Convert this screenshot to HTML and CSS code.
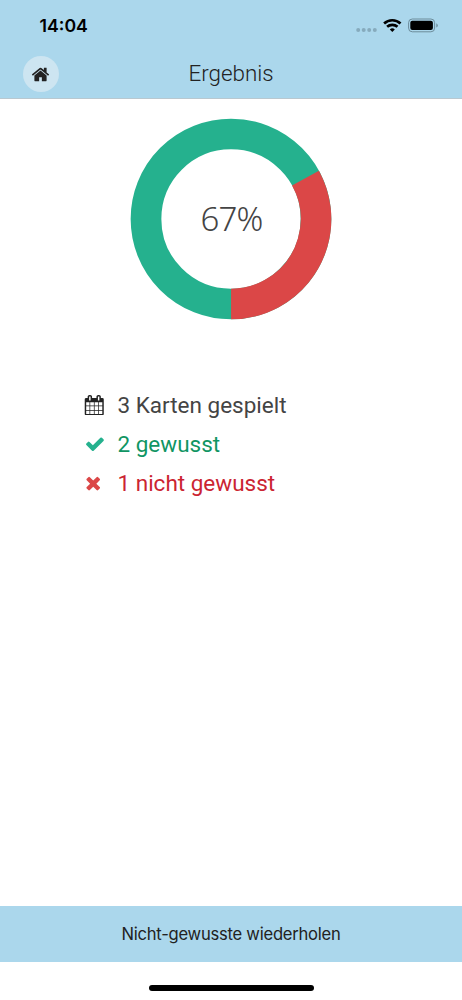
FILE: index.html
```html
<!DOCTYPE html>
<html lang="de">
<head>
  <meta charset="UTF-8" />
  <meta name="viewport" content="width=device-width, initial-scale=1.0" />
  <title>Ergebnis</title>
  <link rel="stylesheet" href="styles.css">
</head>
<body>

<header>
  <div class="statusbar">
    <span class="time">14:04</span>
    <svg class="status-icons" width="84" height="20" viewBox="0 0 84 20">
      <g fill="#86abbd">
        <circle cx="2.2" cy="14" r="2" />
        <circle cx="7.7" cy="14" r="2" />
        <circle cx="13.2" cy="14" r="2" />
        <circle cx="18.8" cy="14" r="2" />
      </g>
      <g fill="none" stroke="#000" stroke-width="2.7">
        <path d="M28.1 7.4a12.2 12.2 0 0 1 16.4 0" />
        <path d="M31.1 10.8a7.7 7.7 0 0 1 10.4 0" />
      </g>
      <path d="M36.3 16l-2.5-2.6a3.7 3.7 0 0 1 5 0z" />
      <rect x="52.6" y="3" width="26" height="12.8" rx="3.7" fill="none" stroke="#6c8c9b" />
      <rect x="54.3" y="4.8" width="22.6" height="9.2" rx="2" />
      <path d="M80.3 7.2q1.5.7 1.5 2.2t-1.5 2.2z" fill="#6c8c9b" />
    </svg>
  </div>
  <div class="navbar">
    <a class="home" href="#" aria-label="Start">
      <svg width="19" height="19" viewBox="0 0 1792 1792"><path d="M1472 992v480q0 26-19 45t-45 19h-384v-384h-256v384h-384q-26 0-45-19t-19-45v-480q0-1 .5-3t.5-3l575-474 575 474q1 2 1 6zm223-69l-62 74q-8 9-21 11h-3q-13 0-21-7l-692-577-692 577q-12 8-24 7-13-2-21-11l-62-74q-8-10-7-23.5t11-21.5l719-599q32-26 76-26t76 26l244 204v-195q0-14 9-23t23-9h192q14 0 23 9t9 23v408l219 182q10 8 11 21.5t-7 23.5z" /></svg>
    </a>
    <h1>Ergebnis</h1>
  </div>
</header>

<main>
  <svg class="chart" width="202" height="202" viewBox="0 0 202 202">
    <circle class="ring right" cx="101" cy="101" r="85" />
    <circle class="ring wrong" cx="101" cy="101" r="85" pathLength="100" stroke-dasharray="33 67" transform="rotate(-28.8 101 101)" />
    <text x="101.5" y="113" text-anchor="middle">67%</text>
  </svg>

  <ul class="stats">
    <li class="played">
      <svg width="20.5" height="20.5" viewBox="0 0 1792 1792"><path d="M192 1664h288v-288h-288v288zm352 0h320v-288h-320v288zm-352-352h288v-320h-288v320zm352 0h320v-320h-320v320zm-352-384h288v-288h-288v288zm736 736h320v-288h-320v288zm-384-736h320v-288h-320v288zm768 736h288v-288h-288v288zm-384-352h320v-320h-320v320zm-352-864v-288q0-13-9.5-22.5t-22.5-9.5h-64q-13 0-22.5 9.5t-9.5 22.5v288q0 13 9.5 22.5t22.5 9.5h64q13 0 22.5-9.5t9.5-22.5zm736 864h288v-320h-288v320zm-384-384h320v-288h-320v288zm384 0h288v-288h-288v288zm32-480v-288q0-13-9.5-22.5t-22.5-9.5h-64q-13 0-22.5 9.5t-9.5 22.5v288q0 13 9.5 22.5t22.5 9.5h64q13 0 22.5-9.5t9.5-22.5zm384-64v1280q0 52-38 90t-90 38h-1408q-52 0-90-38t-38-90v-1280q0-52 38-90t90-38h128v-96q0-66 47-113t113-47h64q66 0 113 47t47 113v96h384v-96q0-66 47-113t113-47h64q66 0 113 47t47 113v96h128q52 0 90 38t38 90z" /></svg>
      <span>3 Karten gespielt</span>
    </li>
    <li class="known">
      <svg width="20.5" height="20.5" viewBox="-60 30 1792 1792"><path d="M1671 566q0 40-28 68l-724 724-136 136q-28 28-68 28t-68-28l-136-136-362-362q-28-28-28-68t28-68l136-136q28-28 68-28t68 28l294 295 656-657q28-28 68-28t68 28l136 136q28 28 28 68z" /></svg>
      <span>2 gewusst</span>
    </li>
    <li class="unknown">
      <svg width="20.5" height="20.5" viewBox="90 30 1792 1792"><path d="M1490 1322q0 40-28 68l-136 136q-28 28-68 28t-68-28l-294-294-294 294q-28 28-68 28t-68-28l-136-136q-28-28-28-68t28-68l294-294-294-294q-28-28-28-68t28-68l136-136q28-28 68-28t68 28l294 294 294-294q28-28 68-28t68 28l136 136q28 28 28 68t-28 68l-294 294 294 294q28 28 28 68z" /></svg>
      <span>1 nicht gewusst</span>
    </li>
  </ul>
</main>

<footer>
  <button type="button">Nicht-gewusste wiederholen</button>
  <div class="home-indicator"></div>
</footer>

</body>
</html>
```
FILE: styles.css
```css
body {
  font-family: Roboto, sans-serif;
  background: #fff;
  color: #444;
  margin: 0;
  height: 1000px;
  display: flex;
  flex-direction: column;
}
svg {
  display: block;
}
header {
  background: #abd7ec;
  box-sizing: border-box;
  height: 99px;
  border-bottom: 1px solid #b9c8d0;
}
.statusbar {
  display: flex;
  justify-content: space-between;
  height: 50px;
  padding: 0 22px 0 39.5px;
  align-items: center;
}
.time {
  font-family: Inter, sans-serif;
  font-size: 17.7px;
  font-weight: 600;
  color: #000;
}
.status-icons {
  margin-top: 2px;
}
.navbar {
  display: grid;
  grid-template-columns: 36px 1fr 36px;
  align-items: center;
  height: 48px;
  padding: 0 22px;
}
.home {
  display: flex;
  align-items: center;
  justify-content: center;
  width: 36px;
  height: 36px;
  margin-left: 0.5px;
  border-radius: 50%;
  background: #cde5f1;
  fill: #222;
}
h1 {
  margin: 0 0 3px;
  font-size: 22.4px;
  font-weight: 300;
  color: #222;
  text-align: center;
}
main {
  flex: 1;
}
.chart {
  margin: 19px auto 0;
}
.chart text {
  font-family: "Noto Sans", sans-serif;
  font-size: 33px;
  font-weight: 300;
  letter-spacing: -0.9px;
  fill: #444;
}
.ring {
  fill: none;
  stroke-width: 30.7;
}
.right {
  stroke: #25b18e;
}
.wrong {
  stroke: #db4747;
}
.stats {
  list-style: none;
  margin: 65.5px 0 0 84px;
  padding: 0;
}
.stats li {
  display: flex;
  align-items: center;
  gap: 13px;
  height: 39px;
  font-size: 22.5px;
}
.played svg {
  fill: #222;
}
.known {
  color: #109563;
}
.known svg {
  fill: #25b18e;
}
.unknown {
  color: #cb2431;
}
.unknown svg {
  fill: #db4747;
}
button {
  display: block;
  width: 100%;
  height: 56px;
  border: none;
  background: #abd7ec;
  color: #222;
  font-family: Inter, sans-serif;
  font-size: 16.6px;
  letter-spacing: -0.25px;
}
.home-indicator {
  width: 165px;
  height: 6px;
  margin: 23px auto 9px;
  border-radius: 3px;
  background: #000;
}
```
